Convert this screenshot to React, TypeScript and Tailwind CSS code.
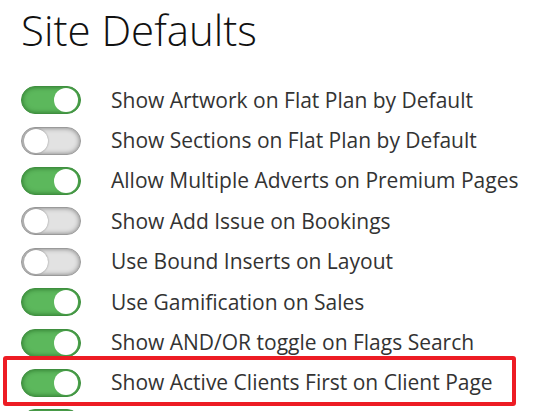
import React from "react";

const settings = [
  { label: "Show Artwork on Flat Plan by Default", on: true },
  { label: "Show Sections on Flat Plan by Default", on: false },
  { label: "Allow Multiple Adverts on Premium Pages", on: true },
  { label: "Show Add Issue on Bookings", on: false },
  { label: "Use Bound Inserts on Layout", on: false },
  { label: "Use Gamification on Sales", on: true },
  { label: "Show AND/OR toggle on Flags Search", on: true },
  { label: "Show Active Clients First on Client Page", on: true, highlight: true },
  { label: "", on: true },
];

function Toggle({ on }: { on: boolean }) {
  return (
    <div
      className={
        on
          ? "relative h-[28px] w-[60px] shrink-0 rounded-full border border-[#3f8f3f] bg-[#5cb85c] shadow-[inset_0_0_5px_rgba(0,60,0,0.55)]"
          : "relative h-[28px] w-[60px] shrink-0 rounded-full border border-[#9a9a9a] bg-[#e2e2e2] shadow-[inset_0_0_5px_rgba(0,0,0,0.45)]"
      }
    >
      <div
        className={
          on
            ? "absolute top-[1px] right-[2px] h-[24px] w-[24px] rounded-full bg-white"
            : "absolute top-[1px] left-[2px] h-[24px] w-[24px] rounded-full bg-white shadow-[0_0_2px_rgba(0,0,0,0.4)]"
        }
      />
    </div>
  );
}

export default function App() {
  return (
    <div
      className="h-[411px] overflow-hidden bg-white pl-[21px] text-[#333]"
      style={{ fontFamily: '"Open Sans", sans-serif' }}
    >
      <h1 className="pt-[2px] text-[42px] font-light leading-[56px] text-[#111]">
        Site Defaults
      </h1>

      <div className="mt-[22px] flex flex-col">
        {settings.map((s, i) => (
          <div key={i} className="relative flex h-[40.4px] items-center gap-[30px]">
            {s.highlight && (
              <span className="absolute top-[-7px] bottom-[-3px] left-[-18px] w-[513px] rounded-[3px] border-4 border-[#ed1c24]" />
            )}
            <Toggle on={s.on} />
            {s.label && <span className="text-[21px] leading-none">{s.label}</span>}
          </div>
        ))}
      </div>
    </div>
  );
}
